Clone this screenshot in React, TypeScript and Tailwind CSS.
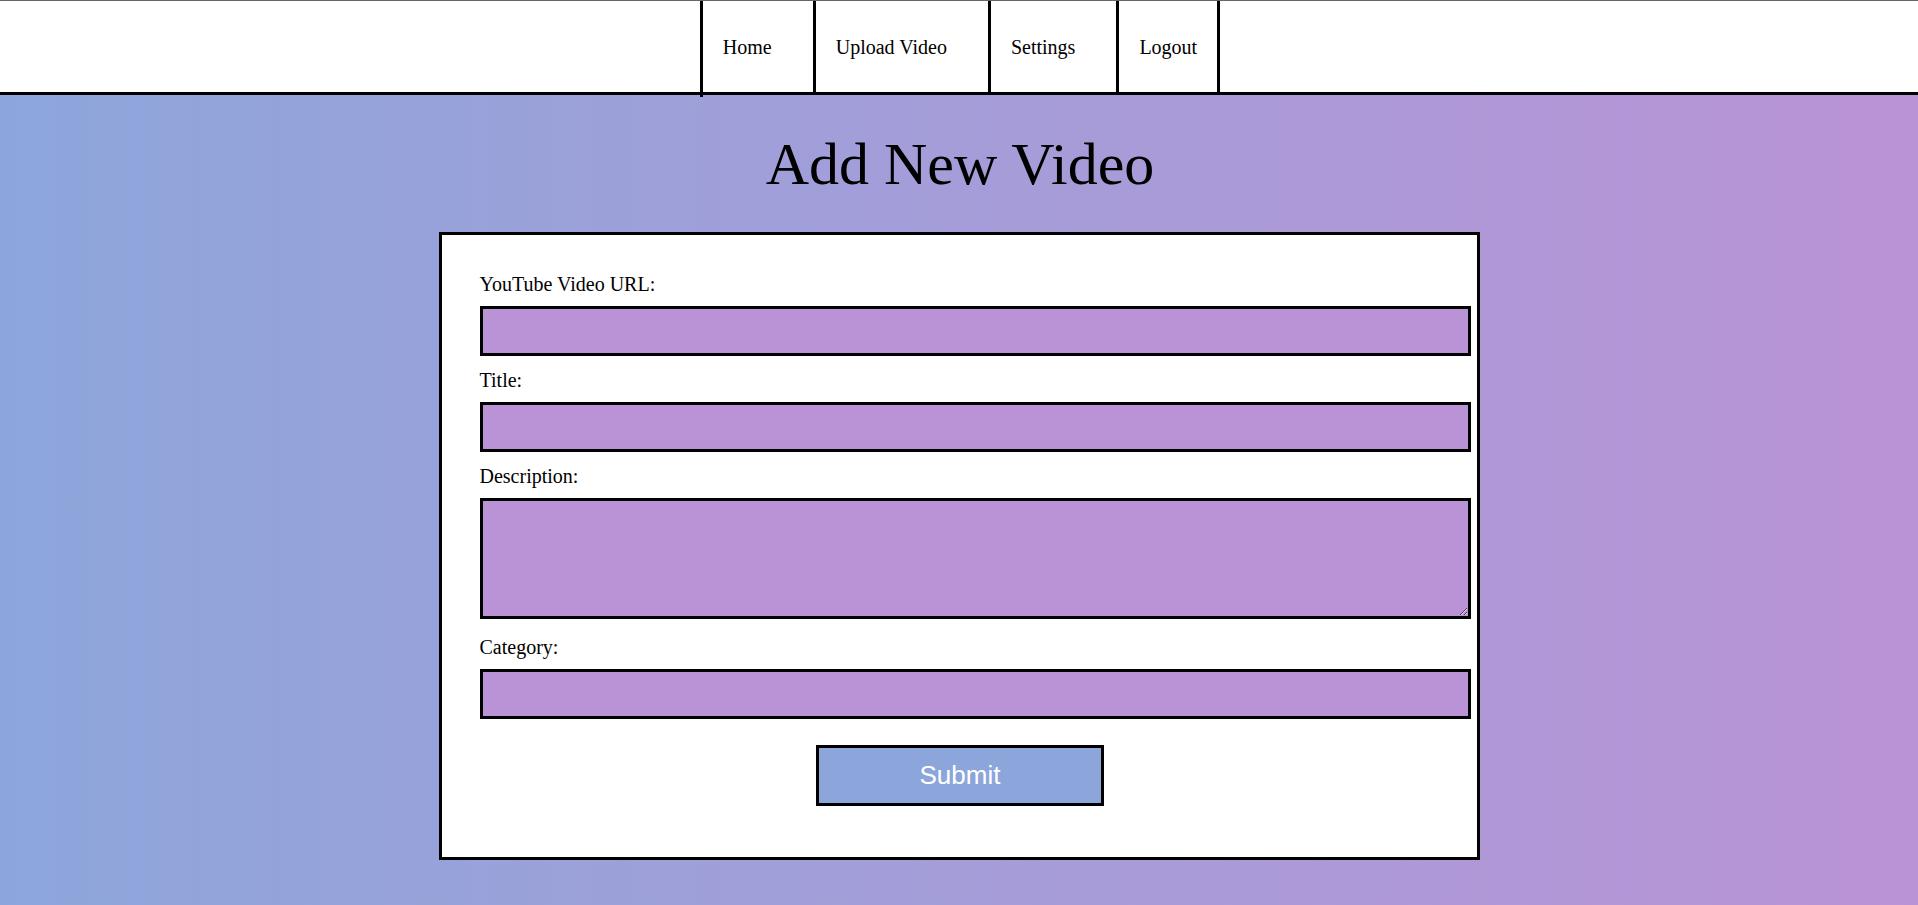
const navItems = ["Home", "Upload Video", "Settings", "Logout"];

function Field({ label, tall, last }: { label: string; tall?: boolean; last?: boolean }) {
  return (
    <div className={last ? "" : tall ? "mb-[17px]" : "mb-[13px]"}>
      <label className="mb-[11px] block text-[20px] leading-[22px] text-black">{label}</label>
      {tall ? (
        <textarea className="block h-[121px] w-[991px] border-[3px] border-black bg-[#B993D6] px-[13px] py-2 outline-none" />
      ) : (
        <input
          type="text"
          className="block h-[50px] w-[991px] border-[3px] border-black bg-[#B993D6] px-[13px] outline-none"
        />
      )}
    </div>
  );
}

export default function App() {
  return (
    <div className="min-h-screen bg-linear-to-r from-[#8CA6DB] to-[#B993D6] font-['Liberation_Serif',serif]">
      <header className="relative z-10 h-[95px] border-t border-[#666] border-b-[3px] border-b-black bg-white">
        <nav className="ml-[2px] flex h-full justify-center">
          {navItems.map((item, i) => (
            <div
              key={item}
              className={`relative flex items-center border-l-[3px] border-black pl-5 text-[20px] text-black ${
                i === navItems.length - 1 ? "border-r-[3px] pr-5" : "pr-[41px]"
              }`}
            >
              {item}
              {i === 0 ? <span className="absolute -bottom-[5px] -left-[3px] h-[5px] w-[3px] bg-black" /> : null}
            </div>
          ))}
        </nav>
      </header>

      <main className="flex flex-col items-center pb-[46px]">
        <h1 className="mt-[37px] mb-[35px] ml-[2px] text-[60px] leading-[65px] text-black">Add New Video</h1>

        <form className="w-[1041px] border-[3px] border-black bg-white pt-[38px] pb-[51px] pl-[38px]">
          <Field label="YouTube Video URL:" />
          <Field label="Title:" />
          <Field label="Description:" tall />
          <Field label="Category:" last />
          <div className="mt-[26px] flex w-[961px] justify-center">
            <button
              type="button"
              className="h-[61px] w-[288px] border-[3px] border-black bg-[#8CA6DB] font-['Liberation_Sans',Arial,sans-serif] text-[26px] text-white"
            >
              Submit
            </button>
          </div>
        </form>
      </main>
    </div>
  );
}
